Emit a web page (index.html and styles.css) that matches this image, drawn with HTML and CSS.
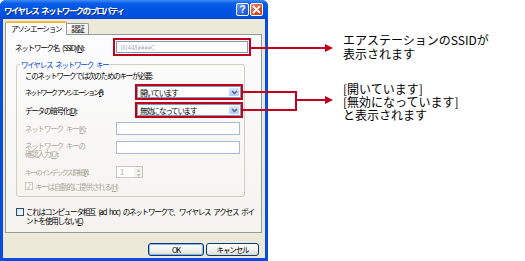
FILE: index.html
```html
<!DOCTYPE html>
<html>
<head>
    <title>ワイヤレス ネットワークのプロパティ</title>
    <link rel="stylesheet" href="styles.css">
</head>
<body>
    <div class="page">
        <div class="dialog">
            <div class="titlebar">
                <span class="title">ワイヤレス ネットワークのプロパティ</span>
                <span class="cap-btn help">?</span>
                <span class="cap-btn close">
                    <svg width="9" height="9" viewBox="0 0 9 9"><path d="M1 1L8 8M8 1L1 8" stroke="#fff" stroke-width="1.8"/></svg>
                </span>
            </div>
            <div class="dlg-body">
                <div class="tabs">
                    <span class="tab active">アソシエーション</span>
                    <span class="tab">認証</span>
                </div>
                <div class="panel">
                    <div class="row-ssid">
                        <label class="lbl-ssid">ネットワーク名 (SSID)(<u>N</u>):</label>
                        <span class="mark mark-ssid">
                            <span class="textbox ssid-box"><span class="blur">00448####C</span></span>
                        </span>
                    </div>

                    <fieldset class="group">
                        <legend>ワイヤレス ネットワーク キー</legend>
                        <div class="line-note">このネットワークでは次のためのキーが必要:</div>

                        <div class="field f-assoc">
                            <label class="tight">ネットワーク アソシエーション(<u>A</u>):</label>
                            <span class="mark mark-combo">
                                <span class="combo"><span>開いています</span><span class="drop"><svg width="7" height="5" viewBox="0 0 7 5"><path d="M1 1L3.5 3.5L6 1" fill="none" stroke="#4d6185" stroke-width="1.5"/></svg></span></span>
                            </span>
                        </div>
                        <div class="field f-crypt">
                            <label>データの暗号化(<u>D</u>):</label>
                            <span class="mark mark-combo">
                                <span class="combo"><span>無効になっています</span><span class="drop"><svg width="7" height="5" viewBox="0 0 7 5"><path d="M1 1L3.5 3.5L6 1" fill="none" stroke="#4d6185" stroke-width="1.5"/></svg></span></span>
                            </span>
                        </div>
                        <div class="field f-key off">
                            <label>ネットワーク キー(<u>K</u>):</label>
                            <span class="textbox key-box"></span>
                        </div>
                        <div class="field f-confirm off">
                            <label>ネットワーク キーの<br>確認入力(<u>O</u>):</label>
                            <span class="textbox key-box"></span>
                        </div>
                        <div class="field f-index off">
                            <label class="tight">キーのインデックス (詳細)(<u>X</u>):</label>
                            <span class="spin"><span class="spin-val">1</span><span class="spin-btns"><span>&#9652;</span><span>&#9662;</span></span></span>
                        </div>
                        <div class="check-row off">
                            <span class="checkbox checked">&#10003;</span>
                            <span>キーは自動的に提供される(<u>H</u>)</span>
                        </div>
                    </fieldset>

                    <div class="adhoc">
                        <span class="checkbox"></span>
                        <span>これはコンピュータ相互 (ad hoc) のネットワークで、ワイヤレス アクセス ポイントを使用しない(<u>C</u>)</span>
                    </div>
                </div>
                <div class="buttons">
                    <button class="btn default">OK</button>
                    <button class="btn">キャンセル</button>
                </div>
            </div>
        </div>

        <div class="notes">
            <p class="note note-ssid">エアステーションのSSIDが<br>表示されます</p>
            <p class="note note-mode">[開いています]<br>[無効になっています]<br>と表示されます</p>
        </div>

        <!-- connector lines from the marked fields to the notes -->
        <svg class="arrows" width="525" height="261" viewBox="0 0 525 261">
            <path d="M251 48H326" stroke="#c0001e" stroke-width="2" fill="none"/>
            <path d="M325 44L333 48L325 52Z" fill="#c0001e"/>
            <path d="M243 92H296V110H243" stroke="#c0001e" stroke-width="2" fill="none"/>
            <path d="M296 100H326" stroke="#c0001e" stroke-width="2" fill="none"/>
            <path d="M325 96L333 100L325 104Z" fill="#c0001e"/>
        </svg>
    </div>
</body>
</html>
```

FILE: styles.css
```css
body {
    margin: 0;
    background-color: #fff;
    font-family: "Noto Sans CJK JP", sans-serif;
}

.page {
    position: relative;
    display: flex;
    width: 525px;
    height: 261px;
}

/* window frame */
.dialog {
    width: 268px;
    height: 261px;
    box-sizing: border-box;
    display: flex;
    flex-direction: column;
    background-color: #0a4be0;
    border-radius: 6px 6px 0 0;
    font-size: 7.5px;
    line-height: 9px;
    letter-spacing: -1.2px;
    word-spacing: 2.5px;
    color: #000;
    white-space: nowrap;
}

.titlebar {
    height: 19px;
    display: flex;
    align-items: center;
    padding: 0 5px 0 4px;
    border-radius: 6px 6px 0 0;
    background: linear-gradient(#3f8cf3 0, #0b5de9 18%, #0054e3 50%, #0150e0 85%, #0042d4 100%);
}

.title {
    flex: 1;
    color: #fff;
    font-weight: bold;
    font-size: 8.5px;
    letter-spacing: -1.6px;
    text-shadow: 1px 1px 0 #0a2d8c;
    padding-top: 1px;
}

.cap-btn {
    width: 13px;
    height: 13px;
    box-sizing: border-box;
    border: 1px solid #fff;
    border-radius: 2px;
    display: flex;
    align-items: center;
    justify-content: center;
    color: #fff;
    font-family: "Liberation Sans", sans-serif;
    font-weight: bold;
    font-size: 10px;
    letter-spacing: 0;
}

.help {
    margin-right: 1px;
    background: linear-gradient(135deg, #6a9ef8, #2b64dc 60%, #1b4fc8);
}

.close {
    background: linear-gradient(135deg, #eb8a6c, #d8512e 55%, #c13a17);
}

.dlg-body {
    flex: 1;
    margin: 0 3px 3px;
    background-color: #ece9d8;
    padding: 2px 3px 0 2px;
    display: flex;
    flex-direction: column;
}

/* tabs */
.tabs {
    display: flex;
    align-items: flex-end;
    height: 13px;
    position: relative;
    z-index: 1;
}

.tab {
    height: 11px;
    padding: 0 4px;
    box-sizing: border-box;
    border: 1px solid #919b9c;
    border-bottom: none;
    border-radius: 2px 2px 0 0;
    background: linear-gradient(#fff, #ecebe6);
    line-height: 10px;
    margin-left: -1px;
}

.tab.active {
    height: 14px;
    margin-left: 0;
    margin-bottom: -1px;
    padding: 0 5px;
    background: #fcfcfe;
    border-top: 2px solid #f7b83c;
    line-height: 12px;
}

.panel {
    height: 199px;
    box-sizing: border-box;
    border: 1px solid #919b9c;
    background: linear-gradient(#fcfcfe, #f4f3ee);
    padding: 3px 0 0 9px;
}

.row-ssid {
    display: flex;
    align-items: center;
}

.lbl-ssid {
    width: 98px;
}

.mark {
    display: inline-flex;
    border: 2px solid #c0001e;
}

.mark-ssid {
    padding: 1px;
}

.textbox {
    display: inline-flex;
    align-items: center;
    box-sizing: border-box;
    border: 1px solid #7f9db9;
    background-color: #fff;
}

.ssid-box {
    width: 132px;
    height: 12px;
    padding-left: 4px;
}

.blur {
    color: #a9a9c2;
    font-size: 6px;
    letter-spacing: 0;
    filter: blur(0.6px);
}

/* group box */
.group {
    margin: 4px 0 0 1px;
    width: 229px;
    box-sizing: border-box;
    border: 1px solid #d0d0bf;
    border-radius: 3px;
    padding: 1px 0 5px 8px;
}

.group legend {
    color: #0046d5;
    padding: 0 1px;
    margin-left: -5px;
}

.line-note {
    height: 12px;
    line-height: 12px;
}

.field {
    display: flex;
    align-items: center;
}

.field label {
    width: 91px;
    flex-shrink: 0;
}

.field label.tight {
    font-size: 7px;
    letter-spacing: -1.8px;
    word-spacing: 1px;
}

.f-assoc,
.f-crypt {
    margin-top: 2px;
}

.mark-combo {
    margin-left: 19px;
}

.combo {
    width: 104px;
    height: 12px;
    box-sizing: border-box;
    display: flex;
    align-items: center;
    border: 1px solid #7f9db9;
    background-color: #fff;
    padding-left: 2px;
}

.drop {
    margin-left: auto;
    margin-right: 1px;
    width: 10px;
    height: 8px;
    border-radius: 1px;
    background: linear-gradient(#dce7fd, #b4cbf6);
    display: flex;
    align-items: center;
    justify-content: center;
}

.off {
    color: #aca899;
}

.key-box {
    width: 124px;
    height: 13px;
    border-color: #a7bbd6;
}

.f-key {
    margin-top: 4px;
}

.f-confirm {
    margin-top: 6px;
    align-items: flex-start;
}

.f-confirm label {
    margin-top: 1px;
    line-height: 8px;
}

.f-index {
    margin-top: 8px;
}

.spin {
    width: 27px;
    height: 12px;
    box-sizing: border-box;
    display: flex;
    border: 1px solid #c9c7ba;
    background-color: #fff;
}

.spin-val {
    flex: 1;
    padding-left: 3px;
    line-height: 10px;
}

.spin-btns {
    width: 8px;
    display: flex;
    flex-direction: column;
    font-size: 6px;
    line-height: 5px;
    letter-spacing: 0;
    text-align: center;
    background-color: #f3f2ec;
    color: #c1bfb2;
}

.check-row,
.adhoc {
    display: flex;
    align-items: center;
}

.check-row {
    margin-top: 3px;
    height: 10px;
}

.checkbox {
    width: 8px;
    height: 8px;
    box-sizing: border-box;
    flex-shrink: 0;
    margin-right: 2px;
    border: 1px solid #1c5180;
    background: linear-gradient(135deg, #dcdcd7, #fff);
    font-size: 7px;
    line-height: 6px;
    letter-spacing: 0;
    text-align: center;
}

.check-row .checkbox {
    border-color: #cac8bb;
    color: #aca899;
    background: #fff;
}

.adhoc {
    margin: 10px 3px 0 1px;
    align-items: flex-start;
    white-space: normal;
}

.adhoc .checkbox {
    margin-top: 1px;
}

.buttons {
    display: flex;
    justify-content: flex-end;
    gap: 2px;
    margin: 10px 3px 0 0;
}

.btn {
    height: 13px;
    width: 56px;
    padding: 0;
    border: 1px solid #003c74;
    border-radius: 3px;
    background: linear-gradient(#fff, #f0f0ea 60%, #dcd9cc);
    font-family: "Noto Sans CJK JP", sans-serif;
    font-size: 7.5px;
    line-height: 9px;
    letter-spacing: -1.1px;
    color: #000;
}

.btn + .btn {
    width: 53px;
}

.btn.default {
    box-shadow: inset 0 0 0 1px #8db2f1;
}

/* annotations on the right */
.notes {
    padding-left: 75px;
}

.note {
    margin: 0;
    font-size: 12px;
    line-height: 14px;
    white-space: nowrap;
}

.note-ssid {
    margin-top: 33px;
}

.note-mode {
    margin-top: 21px;
    line-height: 13px;
}

.arrows {
    position: absolute;
    left: 0;
    top: 0;
    pointer-events: none;
}
```
